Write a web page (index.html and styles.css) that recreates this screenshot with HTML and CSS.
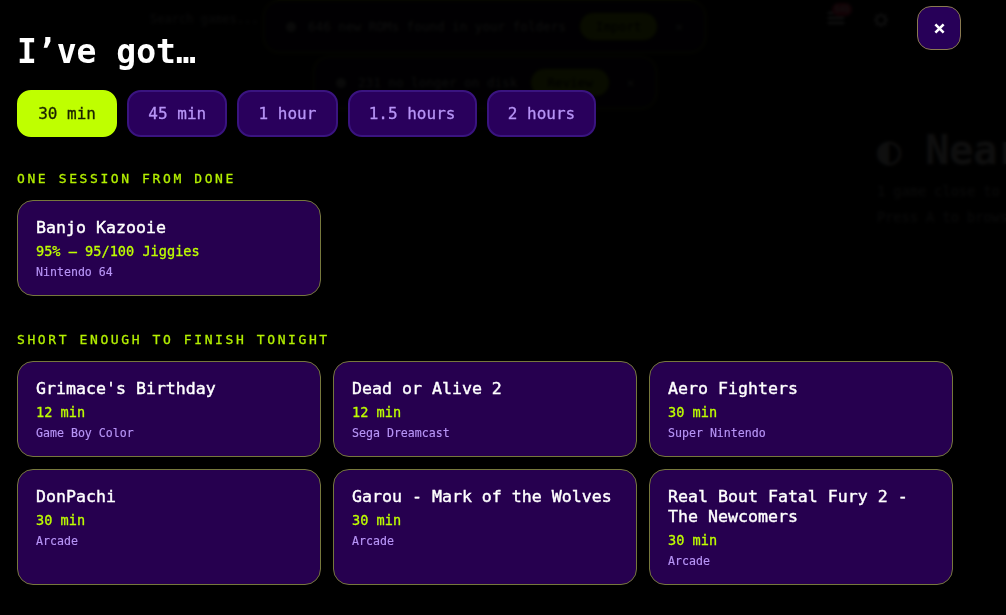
FILE: index.html
```html
<!DOCTYPE html>
<html lang="en">
<head>
    <meta charset="UTF-8">
    <meta name="viewport" content="width=device-width, initial-scale=1.0">
    <title>I've got...</title>
    <link rel="stylesheet" href="styles.css">
</head>
<body>
    <!-- Library behind the overlay -->
    <div class="app">
        <span class="search-hint">Search games...</span>
        <div class="toast toast-roms">
            <span class="toast-dot"></span>
            <span class="toast-text">646 new ROMs found in your folders</span>
            <span class="toast-btn">Import</span>
            <span class="toast-close">✕</span>
        </div>
        <div class="toast toast-missing">
            <span class="toast-dot"></span>
            <span class="toast-text">231 no longer on disk</span>
            <span class="toast-btn">Review</span>
            <span class="toast-close">✕</span>
        </div>
        <svg class="menu-icon" viewBox="0 0 18 18" width="18" height="18">
            <path d="M1 4h16M1 9h16M1 14h16" stroke="#fff" stroke-width="2"/>
        </svg>
        <span class="menu-badge">646</span>
        <svg class="gear-icon" viewBox="0 0 14 14" width="14" height="14">
            <circle cx="7" cy="7" r="4.5" fill="none" stroke="#fff" stroke-width="1.6"/>
            <path d="M7 0v3M7 11v3M0 7h3M11 7h3M2 2l2 2M10 10l2 2M12 2l-2 2M4 10l-2 2" stroke="#fff" stroke-width="1.4"/>
        </svg>
        <div class="near">
            <h2>◐ Nearly done</h2>
            <p>1 game close to finished</p>
            <p>Press A to browse</p>
        </div>
    </div>

    <!-- Time picker overlay -->
    <div class="overlay">
        <button class="close-btn">
            <svg viewBox="0 0 12 12" width="11" height="11">
                <path d="M1.5 1.5l9 9M10.5 1.5l-9 9" stroke="#fff" stroke-width="2.8"/>
            </svg>
        </button>
        <h1>I’ve got…</h1>
        <div class="chips">
            <button class="chip active">30 min</button>
            <button class="chip">45 min</button>
            <button class="chip">1 hour</button>
            <button class="chip">1.5 hours</button>
            <button class="chip">2 hours</button>
        </div>

        <h3 class="section-label">ONE SESSION FROM DONE</h3>
        <div class="cards">
            <div class="card">
                <div class="card-title">Banjo Kazooie</div>
                <div class="card-meta">95% — 95/100 Jiggies</div>
                <div class="card-platform">Nintendo 64</div>
            </div>
        </div>

        <h3 class="section-label">SHORT ENOUGH TO FINISH TONIGHT</h3>
        <div class="cards">
            <div class="card">
                <div class="card-title">Grimace's Birthday</div>
                <div class="card-meta">12 min</div>
                <div class="card-platform">Game Boy Color</div>
            </div>
            <div class="card">
                <div class="card-title">Dead or Alive 2</div>
                <div class="card-meta">12 min</div>
                <div class="card-platform">Sega Dreamcast</div>
            </div>
            <div class="card">
                <div class="card-title">Aero Fighters</div>
                <div class="card-meta">30 min</div>
                <div class="card-platform">Super Nintendo</div>
            </div>
            <div class="card">
                <div class="card-title">DonPachi</div>
                <div class="card-meta">30 min</div>
                <div class="card-platform">Arcade</div>
            </div>
            <div class="card">
                <div class="card-title">Garou - Mark of the Wolves</div>
                <div class="card-meta">30 min</div>
                <div class="card-platform">Arcade</div>
            </div>
            <div class="card">
                <div class="card-title">Real Bout Fatal Fury 2 - The Newcomers</div>
                <div class="card-meta">30 min</div>
                <div class="card-platform">Arcade</div>
            </div>
        </div>
    </div>
</body>
</html>
```

FILE: styles.css
```css
* {
    margin: 0;
    padding: 0;
    box-sizing: border-box;
    font-family: "DejaVu Sans Mono", "Liberation Mono", monospace;
}

html, body {
    height: 100%;
    overflow: hidden;
    background: #000;
}

/* Library behind the overlay */
.app {
    position: absolute;
    inset: 0;
    overflow: hidden;
    color: #fff;
    background: #0a0a0a;
}

.search-hint {
    position: absolute;
    left: 150px;
    top: 12px;
    font-size: 12px;
    color: #888;
}

.toast {
    position: absolute;
    display: flex;
    align-items: center;
    gap: 12px;
    height: 53px;
    padding: 0 22px;
    font-size: 12.6px;
    border: 1px solid #6a8a00;
    border-radius: 16px;
    background: #120a1c;
}

.toast-roms {
    left: 263px;
    top: 0;
    width: 443px;
}

.toast-missing {
    left: 313px;
    top: 56px;
    width: 344px;
}

.toast-dot {
    flex: none;
    width: 10px;
    height: 10px;
    border-radius: 50%;
    background: #888;
}

.toast-text {
    white-space: nowrap;
    color: #bbb;
}

.toast-btn {
    padding: 6px 16px;
    margin-left: 2px;
    border-radius: 14px;
    background: #7ea800;
    color: #000;
}

.toast-close {
    margin-left: 6px;
    color: #999;
}

.menu-icon {
    position: absolute;
    left: 827px;
    top: 9px;
}

.menu-badge {
    position: absolute;
    left: 832px;
    top: 3px;
    padding: 2px 3px;
    font-size: 8px;
    border-radius: 7px;
    background: #ff2050;
}

.gear-icon {
    position: absolute;
    left: 874px;
    top: 13px;
}

.near {
    position: absolute;
    left: 877px;
    top: 126px;
    width: 500px;
    white-space: nowrap;
}

.near h2 {
    font-size: 40px;
    line-height: 48px;
    margin-bottom: 4px;
    color: #ccc;
}

.near p {
    font-size: 13.6px;
    line-height: 26px;
    color: #888;
}

/* Overlay */
.overlay {
    position: absolute;
    inset: 0;
    padding: 31px 17px;
    background: rgba(0, 0, 0, 0.93);
    backdrop-filter: blur(1.5px);
}

.overlay h1 {
    font-size: 33px;
    line-height: 42px;
    font-weight: 700;
    color: #fff;
    margin-bottom: 17px;
}

.close-btn {
    position: absolute;
    left: 917px;
    top: 6px;
    width: 44px;
    height: 44px;
    display: flex;
    align-items: center;
    justify-content: center;
    background: #270058;
    border: 1px solid #8a7a50;
    border-radius: 14px;
}

.chips {
    display: flex;
    gap: 10px;
    margin-bottom: 34px;
}

.chip {
    height: 47px;
    padding: 0 19.2px;
    font-size: 16px;
    -webkit-text-stroke: 0.3px;
    color: #b794f6;
    background: #29005c;
    border: 2px solid #3a1480;
    border-radius: 14px;
}

.chip.active {
    color: #1a2000;
    background: #bfff00;
    border-color: #bfff00;
}

.section-label {
    font-size: 13px;
    line-height: 16px;
    font-weight: 400;
    -webkit-text-stroke: 0.3px;
    letter-spacing: 2.6px;
    color: #b4f000;
    margin-bottom: 13px;
}

.cards {
    display: grid;
    grid-template-columns: repeat(3, 304px);
    gap: 12px;
    margin-bottom: 36px;
}

.card {
    padding: 17px 18px 14px;
    background: #26004f;
    border: 1px solid #76783c;
    border-radius: 16px;
}

.card-title {
    font-size: 16.6px;
    line-height: 20px;
    -webkit-text-stroke: 0.4px;
    color: #fff;
    margin-bottom: 4px;
}

.card-meta {
    font-size: 13.6px;
    line-height: 18px;
    -webkit-text-stroke: 0.3px;
    color: #bfff00;
    margin-bottom: 3px;
}

.card-platform {
    font-size: 11.6px;
    line-height: 18px;
    -webkit-text-stroke: 0.15px;
    color: #b794f6;
}
```
